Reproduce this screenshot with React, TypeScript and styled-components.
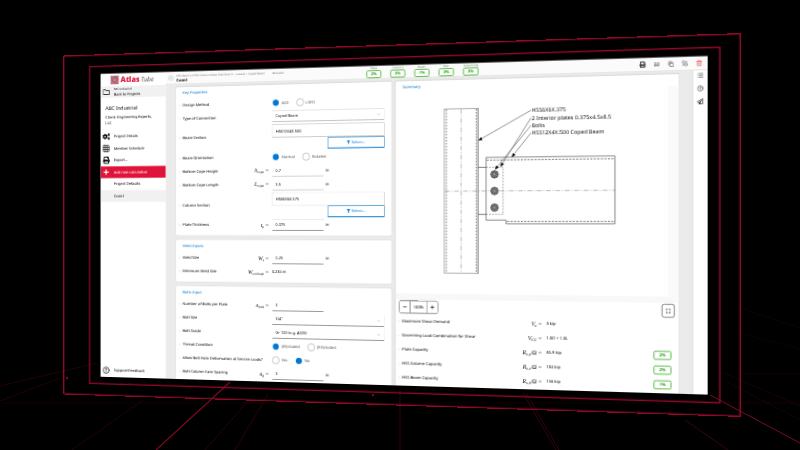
import React from "react";
import styled, { createGlobalStyle, css } from "styled-components";
import { FaCogs, FaFilter, FaPlus, FaPrint, FaRegFolder, FaRegPaperPlane } from "react-icons/fa";
import {
  ChevronDown,
  ChevronRight,
  CircleHelp,
  Copy,
  Grid3x3,
  List,
  Minus,
  Plus,
  Trash2,
} from "lucide-react";

const BLUE = "#0078d4";
const RED = "#e0143a";
const FRAME = "#940b2b";

const GlobalStyle = createGlobalStyle`
  *, *::before, *::after { box-sizing: border-box; }
  body { margin: 0; background: #000; overflow: hidden; }
  button, input, select { font: inherit; color: inherit; margin: 0; }
`;

/* ---------- stage: a screen floating in a dark room ---------- */

const Stage = styled.div`
  position: relative;
  display: flex;
  align-items: center;
  justify-content: center;
  height: 100vh;
  overflow: hidden;
  background: #000;
  perspective: 960px;
`;

const Floor = styled.svg`
  position: absolute;
  inset: 0;
  width: 100%;
  height: 100%;
`;

const Plane = styled.div`
  display: flex;
  align-items: center;
  justify-content: center;
  flex: none;
  width: 86vw;
  height: 80vh;
  margin-right: 38px;
  transform: rotateY(-10deg);
`;

/* The screen is laid out at three times its displayed size. */
const OuterFrame = styled.div`
  display: flex;
  flex: none;
  width: 300%;
  height: 300%;
  padding: 32px 51px 32px 85px;
  border: 4px solid ${FRAME};
  transform: scale(0.3333);
`;

const InnerFrame = styled.div`
  display: flex;
  flex: 1;
  min-width: 0;
  padding: 22px 31px 20px 35px;
  border: 4px solid ${FRAME};
`;

const AppWindow = styled.div`
  display: flex;
  flex: 1;
  min-width: 0;
  overflow: hidden;
  background: #fff;
  color: #000;
  font-family: "Noto Sans", "Open Sans", sans-serif;
  font-size: 12px;
  line-height: 16px;
  text-rendering: geometricPrecision;
`;

/* ---------- sidebar ---------- */

const Sidebar = styled.aside`
  display: flex;
  flex-direction: column;
  flex: none;
  width: 219px;
  background: #fff;
`;

const Brand = styled.div`
  display: flex;
  align-items: center;
  gap: 6px;
  height: 40px;
  padding-left: 34px;
`;

const BrandName = styled.span`
  color: ${RED};
  font-family: "Open Sans", sans-serif;
  font-size: 24px;
  font-weight: 800;
  line-height: 28px;
`;

const BrandSuffix = styled.span`
  margin-left: 4px;
  color: #444;
  font-size: 20px;
  font-style: italic;
  font-weight: 400;
`;

const SideLink = styled.a<{ $tone?: "plain" | "muted" | "primary" }>`
  display: flex;
  flex: 1;
  align-items: center;
  gap: 13px;
  padding-left: 6px;
  color: #000;
  text-decoration: none;
  ${(p) => p.$tone === "muted" && css`background: #f1f1f1;`}
  ${(p) => p.$tone === "primary" && css`background: ${RED}; color: #fff;`}
`;

const IconSlot = styled.span`
  display: flex;
  justify-content: center;
  flex: none;
  width: 26px;
`;

const BackRow = styled.div`
  display: flex;
  height: 36px;
`;

const BackText = styled.span`
  display: flex;
  flex-direction: column;
  small { font-size: 9px; line-height: 14px; }
`;

const Client = styled.div`
  padding: 22px 30px 0 17px;
  height: 104px;
  line-height: 19px;
`;

const ClientName = styled.div`
  font-size: 16px;
  line-height: 24px;
  margin-bottom: 6px;
`;

const SideNav = styled.nav`
  display: flex;
  flex-direction: column;
  height: 225px;
`;

const Support = styled.div`
  display: flex;
  height: 36px;
  margin-top: auto;
  margin-bottom: 3px;
`;

/* ---------- header ---------- */

const Main = styled.div`
  display: flex;
  flex-direction: column;
  flex: 1;
  min-width: 0;
`;

const Header = styled.header`
  display: flex;
  align-items: center;
  flex: none;
  height: 40px;
  padding: 0 14px 0 8px;
  border-bottom: 2px solid #dcdcdc;
  background: #fbfbfb;
`;

const Collapse = styled.button`
  display: flex;
  align-items: center;
  justify-content: center;
  width: 18px;
  height: 14px;
  padding: 0;
  border: 1px solid #999;
  border-radius: 7px;
  background: none;
`;

const Titles = styled.div`
  flex: none;
  width: 614px;
  padding: 2px 0 0 9px;
`;

const Crumbs = styled.div`
  display: flex;
  gap: 24px;
  color: #777;
  font-size: 9px;
  line-height: 12px;
`;

const PageTitle = styled.h1`
  margin: 0;
  font-size: 12px;
  font-weight: 700;
  line-height: 16px;
`;

const Checks = styled.div`
  display: flex;
  gap: 27px;
`;

const Check = styled.div`
  display: flex;
  flex-direction: column;
  align-items: center;
  width: 46px;
  color: #777;
  font-size: 9px;
  line-height: 12px;
  white-space: nowrap;
`;

const Badge = styled.span<{ $large?: boolean }>`
  display: flex;
  align-items: center;
  justify-content: center;
  width: ${(p) => (p.$large ? 50 : 46)}px;
  height: ${(p) => (p.$large ? 26 : 24)}px;
  border: 3px solid #62c04e;
  border-radius: 5px;
  background: #fff;
  color: #2f9e1c;
  font-size: 12px;
  font-weight: 700;
`;

const Tools = styled.div`
  display: flex;
  gap: 21px;
  margin-left: auto;
`;

const IconButton = styled.button<{ $danger?: boolean }>`
  display: flex;
  align-items: center;
  justify-content: center;
  width: 18px;
  height: 20px;
  padding: 0;
  border: 0;
  background: none;
  color: ${(p) => (p.$danger ? "#e8443a" : "#222")};
`;

/* ---------- workspace ---------- */

const Body = styled.div`
  display: flex;
  flex: 1;
  min-height: 0;
`;

const Workspace = styled.div`
  display: grid;
  grid-template-columns: 5fr 6fr;
  gap: 12px;
  flex: 1;
  min-width: 0;
  padding: 8px 36px 0 34px;
  background: #ebebeb;
`;

const Rail = styled.aside`
  display: flex;
  flex-direction: column;
  align-items: center;
  gap: 17px;
  width: 43px;
  padding-top: 4px;
  border-left: 3px solid #d6d6d6;
`;

const FormColumn = styled.div`
  display: flex;
  flex-direction: column;
  gap: 14px;
  min-width: 0;
`;

const Card = styled.section`
  flex: none;
  padding-bottom: 11px;
  border-radius: 4px;
  background: #fff;
  box-shadow: 0 0 4px rgba(0, 0, 0, 0.12);
`;

const CardTitle = styled.h2`
  margin: 0;
  padding: 10px 22px 9px;
  color: ${BLUE};
  font-size: 12px;
  font-weight: 400;
  line-height: 16px;
`;

const Row = styled.div<{ $tall?: boolean }>`
  display: grid;
  grid-template-columns: 22px 279px 1fr;
  align-items: center;
  height: ${(p) => (p.$tall ? 82 : 42)}px;
  padding-right: 21px;
`;

const Chevron = styled(ChevronRight)`
  justify-self: center;
  color: #888;
`;

const Label = styled.label`
  display: flex;
  align-items: center;
  justify-content: space-between;
  white-space: nowrap;
`;

const Symbol = styled.span`
  font-family: "Liberation Serif", serif;
  font-size: 17px;
  font-style: italic;
  white-space: nowrap;
  sub { font-size: 11px; line-height: 0; vertical-align: -3px; }
`;

const Field = styled.div`
  display: flex;
  align-items: center;
  gap: 6px;
  padding-left: 10px;
  white-space: nowrap;
`;

const control = css`
  height: 36px;
  padding: 0 10px;
  border: 1px solid #b5b5b5;
  border-bottom: 3px solid #999;
  border-radius: 2px;
  background: #fff;
`;

const TextInput = styled.input<{ $wide?: boolean }>`
  ${control}
  width: ${(p) => (p.$wide ? "100%" : "163px")};
  ${(p) => p.$wide && css`height: 41px; border-width: 2px;`}
`;

const SelectWrap = styled.div`
  display: grid;
  align-items: center;
  flex: 1;
  > * { grid-area: 1 / 1; }
  > svg { justify-self: end; margin-right: 12px; color: #777; pointer-events: none; }
`;

const Select = styled.select`
  ${control}
  width: 100%;
  appearance: none;
`;

const Picker = styled.div`
  display: flex;
  flex-direction: column;
  align-items: flex-end;
  flex: 1;
`;

const PickButton = styled.button`
  display: flex;
  align-items: center;
  justify-content: center;
  gap: 4px;
  width: 50%;
  height: 36px;
  border: 2px solid #3d96da;
  border-bottom-width: 4px;
  border-radius: 2px;
  background: #fff;
  color: ${BLUE};
`;

const Choice = styled.label`
  display: flex;
  align-items: center;
  gap: 6px;
  margin-right: 18px;
  color: #555;
`;

const Radio = styled.input`
  appearance: none;
  width: 24px;
  height: 24px;
  border: 2px solid #aaa;
  border-radius: 50%;
  background: #fff;
  &:checked {
    border: 2px solid #e3eef8;
    background: ${BLUE};
    background-clip: padding-box;
  }
`;

/* ---------- summary ---------- */

const SummaryCard = styled(Card)`
  min-width: 0;
  overflow: hidden;
`;

const Plot = styled.div`
  border-right: 30px solid #fafafa;
  border-bottom: 18px solid #f8f8f8;
`;

const Drawing = styled.svg`
  display: block;
  width: 100%;
  height: 599px;
`;

const ZoomBar = styled.div`
  display: flex;
  justify-content: space-between;
  padding: 3px 11px;
`;

const ZoomGroup = styled.div`
  display: flex;
  align-items: stretch;
  height: 39px;
  border: 2px solid #555;
  border-radius: 7px;
  overflow: hidden;
`;

const ZoomButton = styled.button`
  display: flex;
  align-items: center;
  justify-content: center;
  width: 31px;
  padding: 0;
  border: 0;
  background: #fff;
`;

const ZoomValue = styled.output`
  display: flex;
  align-items: center;
  justify-content: center;
  width: 52px;
  border: solid #555;
  border-width: 0 2px;
`;

const FitButton = styled(ZoomButton)`
  width: 36px;
  height: 39px;
  border: 2px solid #555;
  border-radius: 7px;
`;

const Result = styled.div`
  display: grid;
  grid-template-columns: 20px 1fr 100px 1fr 50px;
  align-items: center;
  height: 42px;
  padding-right: 20px;
  ${Symbol} { text-align: right; }
`;

const ResultName = styled.span`
  white-space: nowrap;
`;

const ResultValue = styled.span`
  padding-left: 12px;
  white-space: nowrap;
`;

/* ---------- pieces ---------- */

function FloorGrid() {
  return (
    <Floor viewBox="0 0 800 450" preserveAspectRatio="none" fill="none" stroke="#7a0a22" aria-hidden="true">
      <path d="M230 382 156 450" strokeWidth="1.2" />
      <path d="M143 400 72 450M0 386 97 363M0 401 60 378" strokeWidth="0.8" opacity="0.35" />
      <path d="M247 402 205 450" strokeDasharray="2 1" opacity="0.5" />
      <path d="M268 394 235 450" opacity="0.35" />
      <path d="M400 390V450M523 393 556 450M526 393 559 450" opacity="0.4" />
      <path d="M710 395 800 443" />
      <path d="M685 420 728 450" opacity="0.45" />
      <path d="M724 373 800 406M727 382 800 420" strokeDasharray="2 1" opacity="0.3" />
      <path d="M0 403H800M740 374H800M740 333 800 349M740 308 800 328" strokeWidth="0.7" opacity="0.2" />
      <circle cx="67" cy="378" r="1.2" fill="#7a0a22" stroke="none" />
      <circle cx="373" cy="395" r="1.2" fill="#7a0a22" stroke="none" />
    </Floor>
  );
}

function AtlasMark() {
  return (
    <svg width="28" height="29" viewBox="0 0 28 29" fill="none" aria-hidden="true">
      <rect width="28" height="29" fill="#e9b9bd" />
      <path
        d="M0 7 7 0M0 14 14 0M0 21 21 0M0 28 28 0M7 28 28 7M14 28 28 14M21 28 28 21M7 0 28 21M14 0 28 14M21 0 28 7M0 0 28 28M0 7 21 28M0 14 14 28M0 21 7 28"
        stroke="#9e2436"
        strokeWidth="1.8"
      />
      <path d="M14 4 24 14 14 24 4 14Z" stroke="#444" strokeWidth="1.5" />
    </svg>
  );
}

function CompareIcon() {
  return (
    <svg width="16" height="14" viewBox="0 0 16 14" fill="none" stroke="#333" strokeWidth="1.6" aria-hidden="true">
      <path d="M1 4c2-3 4 2 6-1M9 4c2-3 4 2 6-1M3 6 1 12M7 5 5 12M11 6 9 12M15 5l-2 7M1 12h5M9 12h5" />
    </svg>
  );
}

function TransferIcon() {
  return (
    <svg width="20" height="20" viewBox="0 0 20 20" fill="none" stroke="#333" strokeWidth="1.6" aria-hidden="true">
      <path d="M9 8V5a3 3 0 0 0-3-3H5a3 3 0 0 0-3 3v2a3 3 0 0 0 3 3h2" />
      <path d="M12 10h3a3 3 0 0 1 3 3v1a3 3 0 0 1-3 3h-3a3 3 0 0 1-3-3v-4zM4 13v3h3M15 7V4h-3" />
    </svg>
  );
}

function FitIcon() {
  return (
    <svg width="14" height="14" viewBox="0 0 16 16" fill="none" stroke="#222" strokeWidth="2.4" aria-hidden="true">
      <path d="M2 6V2h4M10 2h4v4M14 10v4h-4M6 14H2v-4" />
    </svg>
  );
}

type SymbolParts = { base: string; sub: string; tail?: string };

function MathSymbol({ base, sub, tail = "" }: SymbolParts) {
  return (
    <Symbol>
      {base}
      <sub>{sub}</sub>
      {tail} =
    </Symbol>
  );
}

type RowProps = {
  id: string;
  label: string;
  symbol?: SymbolParts;
  tall?: boolean;
  children: React.ReactNode;
};

function FormRow({ id, label, symbol, tall, children }: RowProps) {
  return (
    <Row $tall={tall}>
      <Chevron size={9} />
      <Label htmlFor={id}>
        {label}
        {symbol && <MathSymbol {...symbol} />}
      </Label>
      <Field>{children}</Field>
    </Row>
  );
}

type NumberRowProps = { id: string; label: string; symbol: SymbolParts; value: string; unit?: string };

function NumberRow({ id, label, symbol, value, unit }: NumberRowProps) {
  return (
    <FormRow id={id} label={label} symbol={symbol}>
      <TextInput id={id} defaultValue={value} />
      {unit}
    </FormRow>
  );
}

function SelectRow({ id, label, value }: { id: string; label: string; value: string }) {
  return (
    <FormRow id={id} label={label}>
      <SelectWrap>
        <Select id={id} defaultValue={value}>
          <option>{value}</option>
        </Select>
        <ChevronDown size={12} />
      </SelectWrap>
    </FormRow>
  );
}

type RadioRowProps = { id: string; label: string; options: string[]; selected: number };

function RadioRow({ id, label, options, selected }: RadioRowProps) {
  return (
    <FormRow id={`${id}-0`} label={label}>
      {options.map((option, i) => (
        <Choice key={option}>
          <Radio type="radio" id={`${id}-${i}`} name={id} defaultChecked={i === selected} />
          {option}
        </Choice>
      ))}
    </FormRow>
  );
}

function SectionRow({ id, label, value }: { id: string; label: string; value: string }) {
  return (
    <FormRow id={id} label={label} tall>
      <Picker>
        <TextInput id={id} $wide defaultValue={value} />
        <PickButton type="button">
          <FaFilter size={12} />
          Select...
        </PickButton>
      </Picker>
    </FormRow>
  );
}

const CALLOUTS = [
  { text: "HSS6X6X.375", y: 143, tip: [250, 229] },
  { text: "2 Interior plates 0.375x4.5x8.5", y: 165, tip: [315, 307] },
  { text: "Bolts", y: 187, tip: [299, 315] },
  { text: "HSS12X4X.500 Coped Beam", y: 209, tip: [348, 279] },
];

function ConnectionDrawing() {
  return (
    <Drawing
      viewBox="0 83 792 599"
      preserveAspectRatio="xMinYMin meet"
      fill="none"
      stroke="#444"
      strokeWidth="2"
      role="img"
      aria-label="Coped beam connection"
    >
      <defs>
        <marker id="tip" viewBox="0 0 12 10" refX="11" refY="5" markerWidth="12" markerHeight="10" markerUnits="userSpaceOnUse" orient="auto">
          <path d="M0 0 12 5 0 10Z" fill="#000" stroke="none" />
        </marker>
      </defs>
      <rect x="148" y="134" width="101" height="489" stroke="#888" />
      <path d="M247 134V623" stroke="#999" />
      <path d="M154 136V622M243 136V622" strokeDasharray="5 4" />
      <path d="M198 136V622M150 379H644" stroke="#777" strokeWidth="1.5" strokeDasharray="14 5 3 5" />
      <path d="M249 309H272M249 448H272" />
      <path d="M272 309H322V448H272" stroke="#777" strokeDasharray="5 4" />
      <path d="M272 280H644V476H331V465H272Z" stroke="#555" />
      <path d="M274 288H643M334 469H643" strokeDasharray="6 4" />
      {[330, 379, 428].map((y) => (
        <g key={y}>
          <circle cx="297" cy={y} r="11" fill="#8a8a8a" />
          <path d={`M285 ${y}h24M297 ${y - 12}v24M289 ${y - 8}l16 16M305 ${y - 8}l-16 16`} stroke="#333" strokeWidth="1.5" />
          <circle cx="297" cy={y} r="5" fill="#999" strokeWidth="1.5" />
        </g>
      ))}
      {CALLOUTS.map((c) => (
        <g key={c.text}>
          <path d={`M404 ${c.y}L${c.tip[0]} ${c.tip[1]}`} stroke="#333" strokeWidth="1.5" markerEnd="url(#tip)" />
          <text x="406" y={c.y + 6} fill="#111" stroke="none" fontSize="16">
            {c.text}
          </text>
        </g>
      ))}
    </Drawing>
  );
}

const CHECKS = [
  ["Plate", "2%"],
  ["Column", "2%"],
  ["Beam", "1%"],
  ["Bolt", "3%"],
  ["Governing", "3%"],
];

const RESULTS: { name: string; symbol: SymbolParts; value: string; use?: string }[] = [
  { name: "Maximum Shear Demand", symbol: { base: "V", sub: "a" }, value: "3 kip" },
  { name: "Governing Load Combination for Shear", symbol: { base: "V", sub: "GC" }, value: "1.0D + 1.0L" },
  { name: "Plate Capacity", symbol: { base: "R", sub: "n,p", tail: "/Ω" }, value: "85.9 kip", use: "2%" },
  { name: "HSS Column Capacity", symbol: { base: "R", sub: "n,c", tail: "/Ω" }, value: "104 kip", use: "2%" },
  { name: "HSS Beam Capacity", symbol: { base: "R", sub: "n,b", tail: "/Ω" }, value: "156 kip", use: "1%" },
];

export default function App() {
  return (
    <>
      <GlobalStyle />
      <Stage>
        <FloorGrid />
        <Plane>
          <OuterFrame>
            <InnerFrame>
              <AppWindow>
                <Sidebar>
                  <Brand>
                    <AtlasMark />
                    <BrandName>
                      Atlas<BrandSuffix>Tube</BrandSuffix>
                    </BrandName>
                  </Brand>
                  <BackRow>
                    <SideLink href="#projects" $tone="muted">
                      <IconSlot><FaRegFolder size={23} /></IconSlot>
                      <BackText>
                        <small>ABC Industrial</small>
                        Back to Projects
                      </BackText>
                    </SideLink>
                  </BackRow>
                  <Client>
                    <ClientName>ABC Industrial</ClientName>
                    Client: Engineering Experts, LLC
                  </Client>
                  <SideNav>
                    <SideLink href="#details"><IconSlot><FaCogs size={25} /></IconSlot>Project Details</SideLink>
                    <SideLink href="#members"><IconSlot><Grid3x3 size={27} strokeWidth={1.8} /></IconSlot>Member Schedule</SideLink>
                    <SideLink href="#export"><IconSlot><FaPrint size={23} /></IconSlot>Export...</SideLink>
                    <SideLink href="#add" $tone="primary"><IconSlot><FaPlus size={20} /></IconSlot>Add new calculation</SideLink>
                    <SideLink href="#defaults"><IconSlot />Project Defaults</SideLink>
                    <SideLink href="#conn1" $tone="muted"><IconSlot />Conn1</SideLink>
                  </SideNav>
                  <Support>
                    <SideLink href="#support"><IconSlot><CircleHelp size={24} /></IconSlot>Support/Feedback</SideLink>
                  </Support>
                </Sidebar>

                <Main>
                  <Header>
                    <Collapse type="button" aria-label="Collapse sidebar"><ChevronRight size={10} /></Collapse>
                    <Titles>
                      <Crumbs>
                        <span>HSS Beam to HSS Column Shear (Secoiso) 11 - Lateral &gt; Coped Beam</span>
                        <span>⊞ Saved</span>
                      </Crumbs>
                      <PageTitle>Conn1</PageTitle>
                    </Titles>
                    <Checks>
                      {CHECKS.map(([name, value]) => (
                        <Check key={name}>
                          {name}
                          <Badge>{value}</Badge>
                        </Check>
                      ))}
                    </Checks>
                    <Tools>
                      <IconButton aria-label="Print"><FaPrint size={18} /></IconButton>
                      <IconButton aria-label="Compare"><CompareIcon /></IconButton>
                      <IconButton aria-label="Copy"><Copy size={17} /></IconButton>
                      <IconButton aria-label="Transfer"><TransferIcon /></IconButton>
                      <IconButton aria-label="Delete" $danger><Trash2 size={18} /></IconButton>
                    </Tools>
                  </Header>

                  <Body>
                    <Workspace>
                      <FormColumn>
                        <Card>
                          <CardTitle>Key Properties</CardTitle>
                          <RadioRow id="method" label="Design Method" options={["ASD", "LRFD"]} selected={0} />
                          <SelectRow id="type" label="Type of Connection" value="Coped Beam" />
                          <SectionRow id="beam" label="Beam Section" value="HSS12X4X.500" />
                          <RadioRow id="orientation" label="Beam Orientation" options={["Normal", "Rotated"]} selected={0} />
                          <NumberRow id="cope-h" label="Bottom Cope Height" symbol={{ base: "h", sub: "cope" }} value="0.7" unit="in" />
                          <NumberRow id="cope-l" label="Bottom Cope Length" symbol={{ base: "L", sub: "cope" }} value="3.5" unit="in" />
                          <SectionRow id="column" label="Column Section" value="HSS6X6X.375" />
                          <NumberRow id="plate" label="Plate Thickness" symbol={{ base: "t", sub: "p" }} value="0.375" unit="in" />
                        </Card>
                        <Card>
                          <CardTitle>Weld Inputs</CardTitle>
                          <NumberRow id="weld" label="Weld Size" symbol={{ base: "W", sub: "s" }} value="0.25" unit="in" />
                          <FormRow id="min-weld" label="Minimum Weld Size" symbol={{ base: "W", sub: "s,min,ap" }}>
                            <output id="min-weld">0.234 in</output>
                          </FormRow>
                        </Card>
                        <Card>
                          <CardTitle>Bolts Input</CardTitle>
                          <NumberRow id="bolts" label="Number of Bolts per Plate" symbol={{ base: "n", sub: "bolt" }} value="3" />
                          <SelectRow id="bolt-size" label="Bolt Size" value={'3/4"'} />
                          <SelectRow id="bolt-grade" label="Bolt Grade" value="Gr 120 (e.g. A325)" />
                          <RadioRow id="thread" label="Thread Condition" options={["(IN)cluded", "(EX)cluded"]} selected={0} />
                          <RadioRow id="deform" label="Allow Bolt Hole Deformation at Service Loads?" options={["Yes", "No"]} selected={1} />
                          <NumberRow id="spacing" label="Bolt-Column Face Spacing" symbol={{ base: "a", sub: "g" }} value="3" unit="in" />
                        </Card>
                      </FormColumn>

                      <SummaryCard>
                        <CardTitle>Summary</CardTitle>
                        <Plot><ConnectionDrawing /></Plot>
                        <ZoomBar>
                          <ZoomGroup>
                            <ZoomButton aria-label="Zoom out"><Minus size={15} strokeWidth={3} /></ZoomButton>
                            <ZoomValue>100%</ZoomValue>
                            <ZoomButton aria-label="Zoom in"><Plus size={15} strokeWidth={3} /></ZoomButton>
                          </ZoomGroup>
                          <FitButton aria-label="Fit to view"><FitIcon /></FitButton>
                        </ZoomBar>
                        {RESULTS.map((r) => (
                          <Result key={r.name}>
                            <Chevron size={9} />
                            <ResultName>{r.name}</ResultName>
                            <MathSymbol {...r.symbol} />
                            <ResultValue>{r.value}</ResultValue>
                            {r.use && <Badge $large>{r.use}</Badge>}
                          </Result>
                        ))}
                      </SummaryCard>
                    </Workspace>

                    <Rail>
                      <IconButton aria-label="Outline"><List size={20} /></IconButton>
                      <IconButton aria-label="Help"><CircleHelp size={20} /></IconButton>
                      <IconButton aria-label="Send"><FaRegPaperPlane size={18} /></IconButton>
                    </Rail>
                  </Body>
                </Main>
              </AppWindow>
            </InnerFrame>
          </OuterFrame>
        </Plane>
      </Stage>
    </>
  );
}
